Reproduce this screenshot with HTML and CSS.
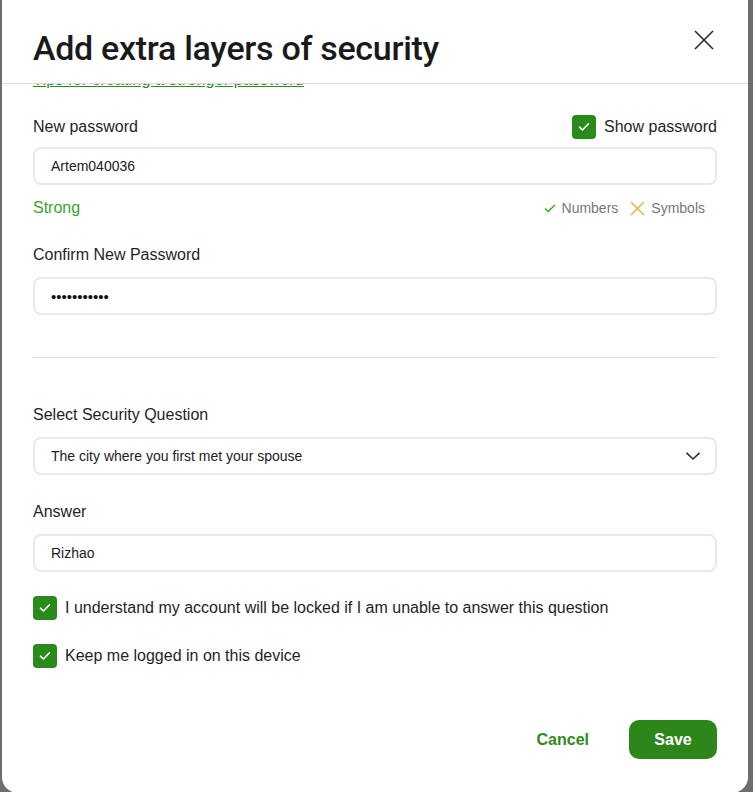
FILE: index.html
```html
<!DOCTYPE html>
<html lang="en">
<head>
<meta charset="utf-8">
<title>Add extra layers of security</title>
<link rel="stylesheet" href="styles.css">
</head>
<body>
<div class="modal">
  <header class="modal-header">
    <h1 class="title">Add extra layers of security</h1>
    <button class="close" aria-label="Close">
      <svg width="20" height="20" viewBox="0 0 20 20"><path d="M1 1 L19 19 M19 1 L1 19" stroke="#2a2a2a" stroke-width="1.6" fill="none"/></svg>
    </button>
  </header>
  <div class="modal-body">
    <div class="content">
      <a class="tips" href="#">Tips for creating a stronger password</a>

      <div class="row-between first">
        <label class="label">New password</label>
        <label class="check">
          <span class="box"><svg width="12" height="10" viewBox="0 0 12 10"><path d="M1.5 5.2 L4.4 8 L10.5 1.8" stroke="#fff" stroke-width="1.6" fill="none" stroke-linecap="round" stroke-linejoin="round"/></svg></span>
          <span class="check-text big">Show password</span>
        </label>
      </div>
      <div class="input">Artem040036</div>

      <div class="row-between strength">
        <span class="strong">Strong</span>
        <div class="rules">
          <span class="rule"><svg width="12" height="9" viewBox="0 0 12 9"><path d="M1 4.5 L4.2 7.5 L11 1" stroke="#3aa52a" stroke-width="1.5" fill="none"/></svg>Numbers</span>
          <span class="rule"><svg width="15" height="15" viewBox="0 0 15 15"><path d="M1 1 L14 14 M14 1 L1 14" stroke="#e3b93c" stroke-width="1.5" fill="none"/></svg>Symbols</span>
        </div>
      </div>

      <label class="label sec conf">Confirm New Password</label>
      <div class="input dots">•••••••••••</div>

      <hr class="divider">

      <label class="label q">Select Security Question</label>
      <div class="input select">
        <span>The city where you first met your spouse</span>
        <svg width="16" height="10" viewBox="0 0 16 10"><path d="M1.5 1.8 L8 8 L14.5 1.8" stroke="#2a2a2a" stroke-width="1.6" fill="none"/></svg>
      </div>

      <label class="label sec">Answer</label>
      <div class="input">Rizhao</div>

      <label class="check line one">
        <span class="box"><svg width="12" height="10" viewBox="0 0 12 10"><path d="M1.5 5.2 L4.4 8 L10.5 1.8" stroke="#fff" stroke-width="1.6" fill="none" stroke-linecap="round" stroke-linejoin="round"/></svg></span>
        <span class="check-text">I understand my account will be locked if I am unable to answer this question</span>
      </label>
      <label class="check line two">
        <span class="box"><svg width="12" height="10" viewBox="0 0 12 10"><path d="M1.5 5.2 L4.4 8 L10.5 1.8" stroke="#fff" stroke-width="1.6" fill="none" stroke-linecap="round" stroke-linejoin="round"/></svg></span>
        <span class="check-text">Keep me logged in on this device</span>
      </label>
    </div>
    <footer class="footer">
      <button class="btn-cancel">Cancel</button>
      <button class="btn-save">Save</button>
    </footer>
  </div>
</div>
</body>
</html>
```

FILE: styles.css
```css
* { box-sizing: border-box; }
html, body {
  margin: 0;
  height: 100%;
  overflow: hidden;
}
body {
  background: #6e6e6e;
  font-family: "Liberation Sans", Arial, sans-serif;
  color: #1f1f1f;
}
.modal {
  margin: -16px 0 0 2px;
  width: 746px;
  height: 809px;
  background: #fff;
  border-radius: 16px;
  display: flex;
  flex-direction: column;
  overflow: hidden;
}
.modal-header {
  height: 100px;
  flex: none;
  display: flex;
  align-items: center;
  justify-content: space-between;
  padding: 28px 34px 0 31px;
  border-bottom: 1px solid #dcdcdc;
}
.title {
  margin: 0;
  font-family: Roboto, "Liberation Sans", Arial, sans-serif;
  font-size: 34px;
  font-weight: 500;
  letter-spacing: -0.3px;
  color: #1a1a1a;
}
.close {
  border: 0;
  background: none;
  padding: 0;
  width: 20px;
  height: 20px;
  margin-top: -16px;
  display: flex;
}
.modal-body {
  flex: 1;
  overflow: hidden;
  display: flex;
  flex-direction: column;
  padding: 0 31px;
}
.content {
  display: flex;
  flex-direction: column;
}
.tips {
  display: block;
  align-self: flex-start;
  margin-top: -14px;
  line-height: 20px;
  font-size: 16px;
  letter-spacing: 0.2px;
  color: #2e8b1e;
  text-decoration: underline;
}
.row-between {
  display: flex;
  align-items: center;
  justify-content: space-between;
}
.row-between.first {
  margin-top: 25px;
  height: 24px;
}
.label {
  display: block;
  font-size: 16px;
  line-height: 24px;
  color: #1f1f1f;
}
.label.sec { margin-top: 25px; }
.label.conf { margin-top: 25px; }
.label.q { margin-top: 45px; }
.input {
  margin-top: 10px;
  height: 38px;
  border: 2px solid #e9e9e9;
  border-radius: 8px;
  padding: 0 16px;
  display: flex;
  align-items: center;
  font-size: 14px;
  color: #222;
}
.row-between.first + .input { margin-top: 8px; }
.input.dots { margin-top: 10px; }
.dots {
  font-size: 15px;
  letter-spacing: 0;
  color: #111;
}
.select {
  justify-content: space-between;
  padding-right: 14px;
}
.strength {
  margin-top: 13px;
  height: 20px;
}
.strong {
  font-size: 16px;
  color: #3aa52a;
  font-weight: 500;
}
.rules {
  display: flex;
  gap: 12px;
  margin-right: 12px;
  font-size: 14px;
  color: #777;
}
.rule {
  display: flex;
  align-items: center;
  gap: 6px;
}
.divider {
  border: 0;
  border-top: 1px solid #dcdcdc;
  margin: 42px 0 0;
  height: 0;
}
.check {
  display: flex;
  align-items: center;
  gap: 8px;
}
.box {
  width: 24px;
  height: 24px;
  border-radius: 4px;
  background: #2b8a1c;
  display: flex;
  align-items: center;
  justify-content: center;
  flex: none;
}
.check-text {
  font-size: 16px;
  color: #1f1f1f;
}
.check-text.big { font-size: 16px; }
.line { height: 24px; }
.line.one { margin-top: 24px; }
.line.two { margin-top: 24px; }
.footer {
  margin-top: 52px;
  display: flex;
  justify-content: flex-end;
  align-items: center;
  gap: 40px;
}
.btn-cancel {
  border: 0;
  background: none;
  font-family: inherit;
  font-size: 16px;
  font-weight: bold;
  color: #2e8b1e;
  padding: 0;
}
.btn-save {
  border: 0;
  width: 88px;
  height: 39px;
  border-radius: 10px;
  background: #2d861a;
  color: #fff;
  font-family: inherit;
  font-size: 16px;
  font-weight: bold;
}
```
